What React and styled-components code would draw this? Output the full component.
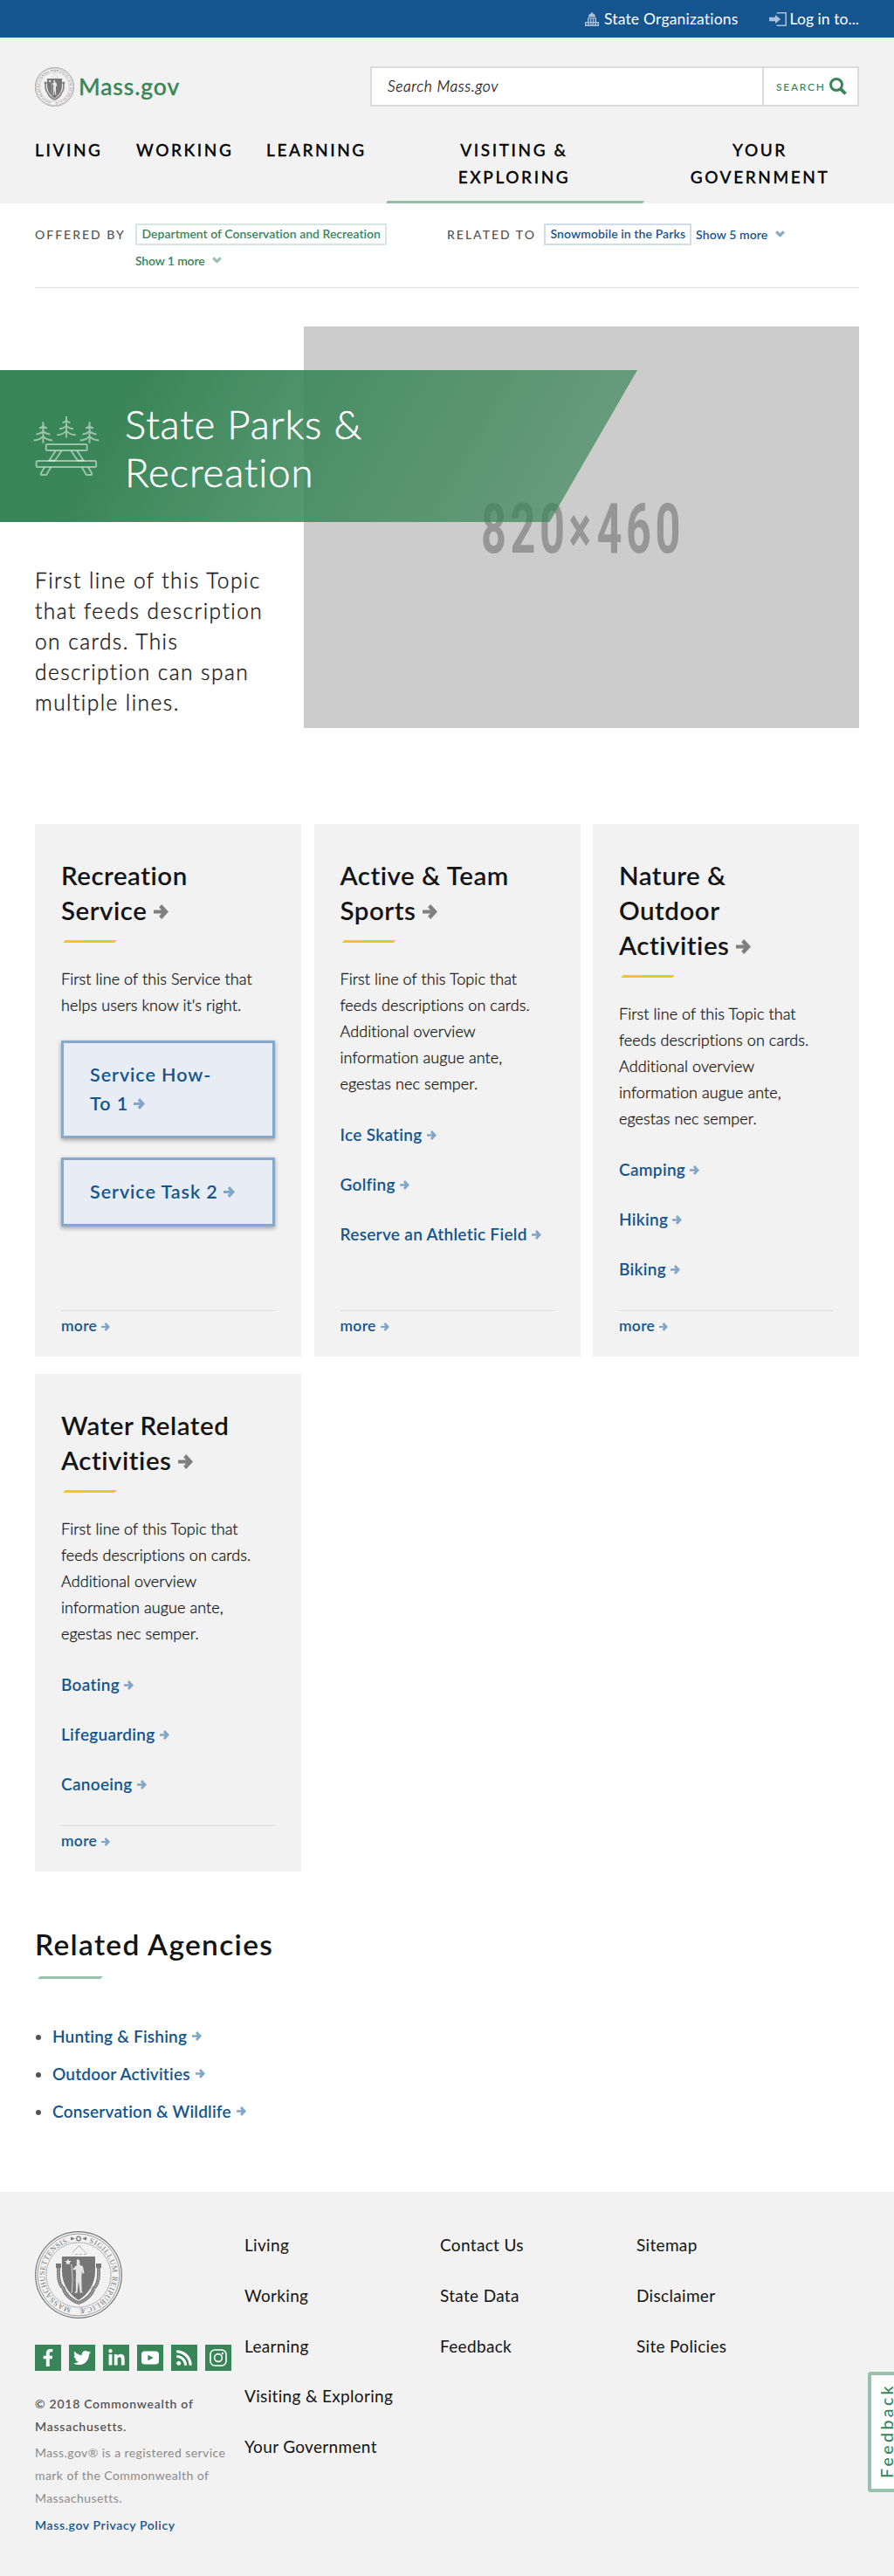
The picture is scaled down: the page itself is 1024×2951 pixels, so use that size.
import React from "react";
import styled, { createGlobalStyle } from "styled-components";
import { FaFacebookF, FaTwitter, FaLinkedinIn, FaRss } from "react-icons/fa";

const color = {
  blue: "#14558f",
  blueSoft: "#83a5c6",
  green: "#388557",
  greenSoft: "#99c2aa",
  ink: "#141414",
  panel: "#f2f2f2",
  rule: "#dcdcdc",
};

const GlobalStyle = createGlobalStyle`
  * { box-sizing: border-box; }
  body {
    margin: 0;
    background: #fff;
    color: ${color.ink};
    font-family: Lato, "Open Sans", sans-serif;
  }
  a { color: inherit; text-decoration: none; }
  ul { list-style: none; margin: 0; padding: 0; }
  h1, h2, p { margin: 0; }
  svg { display: block; flex: none; }
`;

const Page = styled.div`
  position: relative;
  width: 1024px;
`;

/* ---------- icons ---------- */

const InlineArrow = styled.svg`
  display: inline-block;
  width: ${(p) => p.$size}px;
  height: ${(p) => p.$size}px;
  margin-left: ${(p) => p.$gap ?? 6}px;
  vertical-align: ${(p) => p.$drop ?? 0}px;
  color: ${(p) => p.$tone ?? color.blueSoft};
`;

const Arrow = ({ size = 11, gap, drop, tone }) => (
  <InlineArrow viewBox="0 0 17 17" $size={size} $gap={gap} $drop={drop} $tone={tone}>
    <path d="M0 6.6h9L6.2 3.2 9.2 0 17 8.5 9.2 17l-3-3.2L9 10.4H0z" fill="currentColor" />
  </InlineArrow>
);

const ChevronDown = () => (
  <svg width="11" height="8" viewBox="0 0 11 8">
    <path d="M1.2 1.3 5.5 5.6 9.8 1.3" fill="none" stroke="currentColor" strokeWidth="3.2" />
  </svg>
);

const CapitolIcon = () => (
  <svg width="16" height="16" viewBox="0 0 16 16" fill="currentColor">
    <path d="M7.4 0h1.2v1.2C10.800 1.600 12 3.400 12.200 5.400H3.800C4 3.400 5.200 1.600 7.400 1.200z" />
    <path d="M3 6.300h10v1.300H3z" />
    <path d="M3 7.600h1.500V11H3zM6 7.600h1.200V11H6zM8.800 7.600H10V11H8.800zM11.500 7.600H13V11h-1.500z" />
    <path d="M0 11h16v1.300H0zM0 12.300h1.500v2.200H0zM3.200 12.300h1.600v2.200H3.200zM6.200 12.300h1.300v2.200H6.200zM8.500 12.300h1.300v2.200H8.500zM11.200 12.300h1.600v2.200h-1.600zM14.500 12.300H16v2.200h-1.500zM0 14.500h16V16H0z" />
  </svg>
);

const LoginIcon = () => (
  <svg width="20" height="16" viewBox="0 0 20 16">
    <path d="M8.500 .75H19.200V15.250H8.500" fill="none" stroke="currentColor" strokeWidth="1.500" />
    <path d="M0 5.800h7V3l6.200 5L7 13v-2.800H0z" fill="currentColor" />
  </svg>
);

const SearchIcon = () => (
  <svg width="20" height="20" viewBox="0 0 20 20" fill="none" stroke="currentColor">
    <circle cx="8" cy="8" r="6.500" strokeWidth="3" />
    <path d="M12.300 12.300 18.500 18.500" strokeWidth="3.800" />
  </svg>
);

const YoutubeIcon = () => (
  <svg width="20" height="16" viewBox="0 0 20 16">
    <rect y=".5" width="20" height="15" rx="3.800" fill="currentColor" />
    <path d="M7.400 4.800v6.400L13.800 8z" fill={color.green} />
  </svg>
);

const InstagramIcon = () => (
  <svg width="20" height="20" viewBox="0 0 20 20" fill="none" stroke="currentColor" strokeWidth="1.600">
    <rect x="1" y="1" width="18" height="18" rx="5" />
    <circle cx="10" cy="10" r="4.400" />
    <circle cx="15" cy="5" r="1.200" fill="currentColor" stroke="none" />
  </svg>
);

const Tree = ({ x, y }) => (
  <g transform={`translate(${x} ${y})`}>
    <path d="M0 0V24.500M-4.500 7.200C-2.500 7-1 6 0 4.500 1 6 2.500 7 4.500 7.200M-8 14.300C-4 14-1.500 12.500 0 10.500 1.500 12.500 4 14 8 14.300M-10.800 21.300C-5.500 21-2 19 0 16.500 2 19 5.500 21 10.800 21.300" />
  </g>
);

const PicnicIcon = () => (
  <svg
    width="76"
    height="70"
    viewBox="-1 -1 76 70"
    fill="none"
    stroke="currentColor"
    strokeWidth="2"
    strokeLinejoin="round"
  >
    <Tree x={10.400} y={6.200} />
    <Tree x={37} y={0} />
    <Tree x={63.500} y={6.200} />
    <rect x="13.700" y="32" width="47" height="7" rx="1.500" />
    <path d="M24.700 39.500 17.300 50.500h6.800L31.500 39.500M49.300 39.500 56.700 50.500h-6.800L42.500 39.500" />
    <rect x="2.600" y="51" width="68.500" height="7" rx="1.500" />
    <path d="M11.800 58.500 7.800 65.200q-.6 1.800 1.200 1.800h5l5.200-8.500M62.200 58.500 66.200 65.200q.6 1.800-1.200 1.800h-5l-5.200-8.500" />
  </svg>
);

const SealText = styled.text`
  font-family: "Liberation Serif", serif;
  font-size: 8.6px;
  fill: #777;
`;

const Seal = ({ size, id }) => (
  <svg width={size} height={size} viewBox="0 0 100 100">
    <defs>
      <path id={id} d="M50 11.200A38.800 38.800 0 1 1 49.990 11.200" />
    </defs>
    <g fill="none" stroke="#777">
      <circle cx="50" cy="50" r="49.300" strokeWidth="1.200" />
      <circle cx="50" cy="50" r="47" strokeWidth=".7" />
      <circle cx="50" cy="50" r="37" strokeWidth="1" strokeDasharray="1 .8" />
    </g>
    <SealText>
      <textPath href={`#${id}`} startOffset="12" textLength="109" lengthAdjust="spacing">
        SIGILLUM REIPUBLICÆ
      </textPath>
    </SealText>
    <SealText>
      <textPath href={`#${id}`} startOffset="130" textLength="103" lengthAdjust="spacing">
        MASSACHUSETTENSIS.
      </textPath>
    </SealText>
    <path d="M41 6.500v4l5-2zM59 6.500v4l-5-2z" fill="#777" />
    <circle cx="50" cy="8.500" r="2.300" fill="none" stroke="#777" strokeWidth="1.200" />
    <path
      d="M27 38v12q0 5 1.500 9 2 5 4 6 1.500 6 6 10 6 5.500 11.500 7 5.500-1.500 11.500-7 4.500-4 6-10 2-1 4-6Q73 55 73 50V38"
      fill="none"
      stroke="#777"
      strokeWidth="3.800"
    />
    <path
      d="M27 38v12q0 5 1.500 9 2 5 4 6 1.500 6 6 10 6 5.500 11.500 7 5.500-1.500 11.500-7 4.500-4 6-10 2-1 4-6Q73 55 73 50V38"
      fill="none"
      stroke="#c4c4c4"
      strokeWidth="1.500"
      strokeDasharray="1.200 1.200"
    />
    <path d="M24 37h6v5h-6zM70 37h6v5h-6z" fill="#777" />
    <path d="M31 29h38v17C69 61 60 73 50 79 40 73 31 61 31 46z" fill="#777" />
    <path d="m38 31.500 1 2.600 2.700.1-2.200 1.700.8 2.700-2.300-1.600-2.300 1.600.8-2.700-2.200-1.700 2.700-.1z" fill="#f1f1f1" />
    <path
      d="M48 32.500q3-1 3.500 2.500l-.3 3.500 3.800 2 1.500 7.500-1.700 1-.9-4-.6 8 .4 16 1.500 1.500h-3.500l-1.700-13-1.500 13-3 .5 1.500-3-.2-12.500 .3-7-.6-5-2.300 1-1-1 2.800-3 1.700-1z"
      fill="#e6e6e6"
    />
    <path d="M41.800 38q2.600 17 .4 33" fill="none" stroke="#ddd" strokeWidth=".9" />
    <path d="M43 24.500 49 18l2-1.500 1 2 7 7M46 26.500h3m2 0h3m2 0h3" fill="none" stroke="#aaa" strokeWidth=".9" />
  </svg>
);

/* ---------- top bar and header ---------- */

const TopBar = styled.div`
  display: flex;
  justify-content: flex-end;
  gap: 35px;
  height: 43px;
  padding-right: 40px;
  background: ${color.blue};
`;

const TopLink = styled.a`
  display: flex;
  align-items: center;
  gap: ${(p) => p.$gap}px;
  color: #fff;
  font-size: 17.5px;
  line-height: 43px;
  letter-spacing: ${(p) => p.$track}px;

  svg { color: #aebfd6; margin-top: 1px; }
`;

const Header = styled.header`
  height: 190px;
  padding: 33px 40px 0;
  background: ${color.panel};
`;

const Brand = styled.div`
  display: flex;
  align-items: center;
  justify-content: space-between;
  height: 46px;
`;

const Logo = styled.a`
  display: flex;
  align-items: center;
  gap: 5px;
  color: ${color.green};
  -webkit-text-stroke: 0.3px currentColor;
  font-size: 26.5px;
  font-weight: 500;
  line-height: 47px;
  letter-spacing: 0.9px;
`;

const SearchBox = styled.form`
  display: flex;
  width: 560px;
  height: 46px;
  border: 2px solid ${color.rule};
  background: #fff;
`;

const SearchField = styled.div`
  flex: 1;
  padding-left: 18px;
  -webkit-text-stroke: 0.3px currentColor;
  font-size: 17.5px;
  font-style: italic;
  font-weight: 300;
  line-height: 42px;
  letter-spacing: 0.6px;
`;

const SearchButton = styled.div`
  display: flex;
  align-items: center;
  gap: 4px;
  width: 109px;
  padding-left: 14px;
  border-left: 2px solid ${color.rule};
  color: ${color.green};
  font-size: 12px;
  font-weight: 500;
  letter-spacing: 1.74px;
`;

const Nav = styled.nav`
  display: grid;
  grid-template-columns: 116px 149px 137px 296px 246px;
  height: 77px;
  margin-top: 34px;
`;

const NavItem = styled.a`
  position: relative;
  padding: ${(p) => (p.$pad ? `0 0 0 ${p.$pad}px` : "0")};
  color: #000;
  -webkit-text-stroke: 0.3px currentColor;
  font-size: 19px;
  font-weight: 500;
  line-height: 31px;
  letter-spacing: 2.6px;
  text-align: ${(p) => (p.$center ? "center" : "left")};

  ${(p) =>
    p.$active &&
    `padding-right: 2px;
    &::after {
      content: "";
      position: absolute;
      left: 0;
      right: 0;
      bottom: 0;
      height: 3px;
      background: #93bda4;
      clip-path: polygon(2px 0, 100% 0, calc(100% - 2px) 100%, 0 100%);
    }`}
`;

/* ---------- relationship strip ---------- */

const Relations = styled.section`
  display: grid;
  grid-template-columns: 472px 472px;
  height: 97px;
  margin: 0 40px;
  padding-top: 23px;
  border-bottom: 1px solid ${color.rule};
`;

const Relation = styled.div`
  display: flex;
  align-items: flex-start;
`;

const RelationLabel = styled.span`
  flex: none;
  width: ${(p) => p.$width}px;
  color: #555;
  font-size: 14px;
  font-weight: 500;
  line-height: 26px;
  letter-spacing: 2px;
`;

const RelationList = styled.div`
  display: flex;
  flex-wrap: wrap;
  gap: 5px;
  color: ${(p) => p.$tone};
  font-size: 14px;
  font-weight: 600;
`;

const Tag = styled.a`
  height: 25px;
  padding: 0 5px 0 5.500px;
  border: 2px solid ${(p) => p.$edge};
  line-height: 20px;
  letter-spacing: ${(p) => p.$track}px;
`;

const ShowMore = styled.a`
  display: flex;
  align-items: center;
  gap: ${(p) => p.$gap}px;
  height: 25px;
  line-height: 23px;
  letter-spacing: ${(p) => p.$track}px;

  svg { color: ${(p) => p.$tone}; margin-top: -1px; }
`;

/* ---------- hero ---------- */

const Hero = styled.section`
  display: grid;
  grid-template-columns: 348px 636px 40px;
  grid-template-rows: 50px 174px 236px;
  margin-top: 44px;
`;

const HeroPicture = styled.div`
  grid-area: 1 / 2 / 4 / 3;
  background: #ccc;
`;

const PictureSize = styled.text`
  font-family: Roboto, sans-serif;
  font-size: 80px;
  font-weight: 700;
  letter-spacing: 7.300px;
  fill: #969696;
`;

const Banner = styled.div`
  grid-area: 2 / 1 / 3 / 4;
  z-index: 1;
  display: flex;
  width: 730px;
  padding: 34px 0 0 38px;
  background: linear-gradient(120deg, ${color.green} 130px, rgba(56, 133, 87, 0.69) 632px);
  clip-path: polygon(0 0, 100% 0, calc(100% - 100.500px) 100%, 0 100%);
  color: rgba(255, 255, 255, 0.5);

  svg { margin-top: 18px; }
`;

const Title = styled.h1`
  width: 320px;
  margin-left: 29px;
  color: #fff;
  -webkit-text-stroke: 0.5px #fff;
  font-size: 45.500px;
  font-weight: 300;
  line-height: 55px;
  letter-spacing: 0.850px;
`;

const Lede = styled.p`
  grid-area: 3 / 1 / 4 / 2;
  width: 320px;
  padding: 49px 0 0 40px;
  -webkit-text-stroke: 0.350px currentColor;
  font-size: 24.500px;
  font-weight: 300;
  line-height: 35px;
  letter-spacing: 1.450px;
`;

/* ---------- cards ---------- */

const Cards = styled.section`
  display: grid;
  grid-template-columns: repeat(3, 305px);
  grid-template-rows: 610px 570px;
  gap: 20px 14.500px;
  padding: 110px 40px 0;
`;

const CardBox = styled.article`
  display: flex;
  flex-direction: column;
  padding: 39px 30px 24px;
  background: ${color.panel};
`;

const CardTitle = styled.h2`
  width: 222px;
  font-size: 29.500px;
  font-weight: 600;
  line-height: 40px;
  letter-spacing: 0.500px;
`;

const Accent = styled.div`
  width: ${(p) => p.$width}px;
  height: 3px;
  margin: ${(p) => p.$margin};
  background: ${(p) => p.$tone};
  clip-path: polygon(3px 0, 100% 0, calc(100% - 3px) 100%, 0 100%);
`;

const CardText = styled.p`
  width: 235px;
  -webkit-text-stroke: 0.3px currentColor;
  font-size: 18px;
  font-weight: 300;
  line-height: 30px;
  letter-spacing: 0.080px;
`;

const CardLinks = styled.ul`
  display: flex;
  flex-direction: column;
  gap: 27px;
  margin-top: 29px;
  color: ${color.blue};
  font-size: 19px;
  font-weight: 600;
  line-height: 30px;
  letter-spacing: 0.3px;
  white-space: nowrap;
`;

const Buttons = styled.div`
  display: flex;
  flex-direction: column;
  gap: 22px;
  margin-top: 26px;
`;

const ServiceButton = styled.a`
  padding: 20px 55px 20px 30px;
  border: 3px solid #87a8c8;
  background: #e8edf5;
  box-shadow: 0 2px 5px rgba(0, 0, 0, 0.35);
  color: ${color.blue};
  font-size: 21.500px;
  font-weight: 600;
  line-height: 33px;
  letter-spacing: 0.950px;
  white-space: nowrap;
`;

const More = styled.a`
  margin-top: auto;
  padding-top: 5px;
  border-top: 1px solid ${color.rule};
  color: ${color.blue};
  font-size: 17.500px;
  font-weight: 600;
  line-height: 23px;
  letter-spacing: 0.300px;
`;

const Card = ({ title, text, links, buttons }) => (
  <CardBox>
    <CardTitle>
      {title} <Arrow size={17} gap={0} drop={1} tone="#7f7f7f" />
    </CardTitle>
    <Accent $width={62} $margin="14px 0 26px 2px" $tone="#f6c51b" />
    <CardText>{text}</CardText>
    {buttons && (
      <Buttons>
        {buttons.map((lines) => (
          <ServiceButton key={lines[0]}>
            {lines.map((line, i) => (
              <React.Fragment key={line}>
                {i > 0 && <br />}
                {line}
              </React.Fragment>
            ))}
            <Arrow size={13} gap={6} drop={1} />
          </ServiceButton>
        ))}
      </Buttons>
    )}
    {links && (
      <CardLinks>
        {links.map((link) => (
          <li key={link}>
            {link}
            <Arrow gap={5} drop={1} />
          </li>
        ))}
      </CardLinks>
    )}
    <More>
      more
      <Arrow size={10} gap={5} drop={0} />
    </More>
  </CardBox>
);

/* ---------- related agencies ---------- */

const Related = styled.section`
  padding: 63px 40px 71px;
`;

const RelatedTitle = styled.h2`
  font-size: 33.500px;
  font-weight: 600;
  line-height: 40px;
  letter-spacing: 1.300px;
`;

const AgencyLink = styled.li`
  display: flex;
  align-items: center;
  color: ${color.blue};
  font-size: 19px;
  font-weight: 600;
  line-height: 43px;
  letter-spacing: 0.200px;

  &::before {
    content: "";
    width: 6px;
    height: 6px;
    margin: 2px 13px 0 1px;
    border-radius: 50%;
    background: #535353;
  }
`;

/* ---------- footer ---------- */

const Footer = styled.footer`
  display: grid;
  grid-template-columns: 240px 224px 225px 1fr;
  height: 440px;
  padding: 32px 40px 0;
  background: ${color.panel};
`;

const FooterInfo = styled.div`
  padding-top: 13px;
`;

const Social = styled.div`
  display: flex;
  gap: 9px;
  margin: 30px 0 25px;
`;

const SocialLink = styled.a`
  display: flex;
  align-items: center;
  justify-content: center;
  width: 30px;
  height: 30px;
  background: ${color.green};
  color: #fff;
`;

const Legal = styled.p`
  width: 226px;
  margin-bottom: ${(p) => p.$after ?? 0}px;
  color: ${(p) => p.$tone};
  font-size: 14px;
  font-weight: ${(p) => p.$weight};
  line-height: 26px;
  letter-spacing: ${(p) => p.$track}px;
`;

const FooterLinks = styled.ul`
  font-size: 19px;
  line-height: 57.750px;
  letter-spacing: 0.330px;
`;

const Feedback = styled.a`
  position: absolute;
  top: 2717px;
  right: 0;
  width: 30px;
  height: 138px;
  border: 4px solid ${color.greenSoft};
  border-right: 0;
  border-radius: 4px 0 0 4px;
  background: #fff;

  span {
    display: block;
    width: 16px;
    height: 118px;
    margin-left: 10px;
    writing-mode: vertical-rl;
    transform: rotate(180deg);
    color: ${color.green};
    font-size: 19.500px;
    font-weight: 500;
    line-height: 16px;
    letter-spacing: 3.400px;
  }
`;

const topic =
  "First line of this Topic that feeds descriptions on cards. Additional overview information augue ante, egestas nec semper.";

const cards = [
  {
    title: "Recreation Service",
    text: "First line of this Service that helps users know it's right.",
    buttons: [["Service How-", "To 1"], ["Service Task 2"]],
  },
  {
    title: "Active & Team Sports",
    text: topic,
    links: ["Ice Skating", "Golfing", "Reserve an Athletic Field"],
  },
  { title: "Nature & Outdoor Activities", text: topic, links: ["Camping", "Hiking", "Biking"] },
  { title: "Water Related Activities", text: topic, links: ["Boating", "Lifeguarding", "Canoeing"] },
];

const agencies = ["Hunting & Fishing", "Outdoor Activities", "Conservation & Wildlife"];

const footerColumns = [
  ["Living", "Working", "Learning", "Visiting & Exploring", "Your Government"],
  ["Contact Us", "State Data", "Feedback"],
  ["Sitemap", "Disclaimer", "Site Policies"],
];

const socialIcons = [
  <FaFacebookF size={20} />,
  <FaTwitter size={20} />,
  <FaLinkedinIn size={21} />,
  <YoutubeIcon />,
  <FaRss size={20} />,
  <InstagramIcon />,
];

export default function App() {
  return (
    <Page>
      <GlobalStyle />
      <TopBar>
        <TopLink $gap={6} $track={0.2}>
          <CapitolIcon />
          State Organizations
        </TopLink>
        <TopLink $gap={4} $track={0.05}>
          <LoginIcon />
          Log in to...
        </TopLink>
      </TopBar>

      <Header>
        <Brand>
          <Logo>
            <Seal size={45} id="seal-ring-header" />
            Mass.gov
          </Logo>
          <SearchBox>
            <SearchField>Search Mass.gov</SearchField>
            <SearchButton>
              SEARCH
              <SearchIcon />
            </SearchButton>
          </SearchBox>
        </Brand>
        <Nav>
          <NavItem>LIVING</NavItem>
          <NavItem>WORKING</NavItem>
          <NavItem>LEARNING</NavItem>
          <NavItem $center $active>
            VISITING &amp;
            <br />
            EXPLORING
          </NavItem>
          <NavItem $center $pad={19}>
            YOUR
            <br />
            GOVERNMENT
          </NavItem>
        </Nav>
      </Header>

      <Relations>
        <Relation>
          <RelationLabel $width={115}>OFFERED BY</RelationLabel>
          <RelationList $tone={color.green}>
            <Tag $edge="#d7e7dd" $track={0.01}>
              Department of Conservation and Recreation
            </Tag>
            <ShowMore $tone={color.greenSoft} $gap={8} $track={-0.15}>
              Show 1 more <ChevronDown />
            </ShowMore>
          </RelationList>
        </Relation>
        <Relation>
          <RelationLabel $width={111}>RELATED TO</RelationLabel>
          <RelationList $tone={color.blue}>
            <Tag $edge="#d0dce8" $track={0.1}>
              Snowmobile in the Parks
            </Tag>
            <ShowMore $tone="#87a8c8" $gap={9} $track={0.1}>
              Show 5 more <ChevronDown />
            </ShowMore>
          </RelationList>
        </Relation>
      </Relations>

      <Hero>
        <HeroPicture>
          <svg width="636" height="460" viewBox="0 0 636 460">
            <PictureSize transform="translate(203 259) scale(.63 1)">
              820
              <tspan fontSize="76">×</tspan>
              <tspan dx="3">460</tspan>
            </PictureSize>
          </svg>
        </HeroPicture>
        <Banner>
          <PicnicIcon />
          <Title>State Parks &amp; Recreation</Title>
        </Banner>
        <Lede>
          First line of this Topic that feeds description on cards. This description can span multiple lines.
        </Lede>
      </Hero>

      <Cards>
        {cards.map((card) => (
          <Card key={card.title} {...card} />
        ))}
      </Cards>

      <Related>
        <RelatedTitle>Related Agencies</RelatedTitle>
        <Accent $width={75} $margin="17px 0 44px 3px" $tone={color.greenSoft} />
        <ul>
          {agencies.map((name) => (
            <AgencyLink key={name}>
              {name}
              <Arrow />
            </AgencyLink>
          ))}
        </ul>
      </Related>

      <Footer>
        <FooterInfo>
          <Seal size={100} id="seal-ring-footer" />
          <Social>
            {socialIcons.map((icon, i) => (
              <SocialLink key={i}>{icon}</SocialLink>
            ))}
          </Social>
          <Legal $tone="#555" $weight={600} $track={0.74} $after={4}>
            © 2018 Commonwealth of Massachusetts.
          </Legal>
          <Legal $tone="#8a8a8a" $weight={400} $track={0.43} $after={5}>
            Mass.gov® is a registered service mark of the Commonwealth of Massachusetts.
          </Legal>
          <Legal $tone={color.blue} $weight={600} $track={0.62}>
            Mass.gov Privacy Policy
          </Legal>
        </FooterInfo>
        {footerColumns.map((links) => (
          <FooterLinks key={links[0]}>
            {links.map((link) => (
              <li key={link}>{link}</li>
            ))}
          </FooterLinks>
        ))}
      </Footer>

      <Feedback>
        <span>Feedback</span>
      </Feedback>
    </Page>
  );
}
